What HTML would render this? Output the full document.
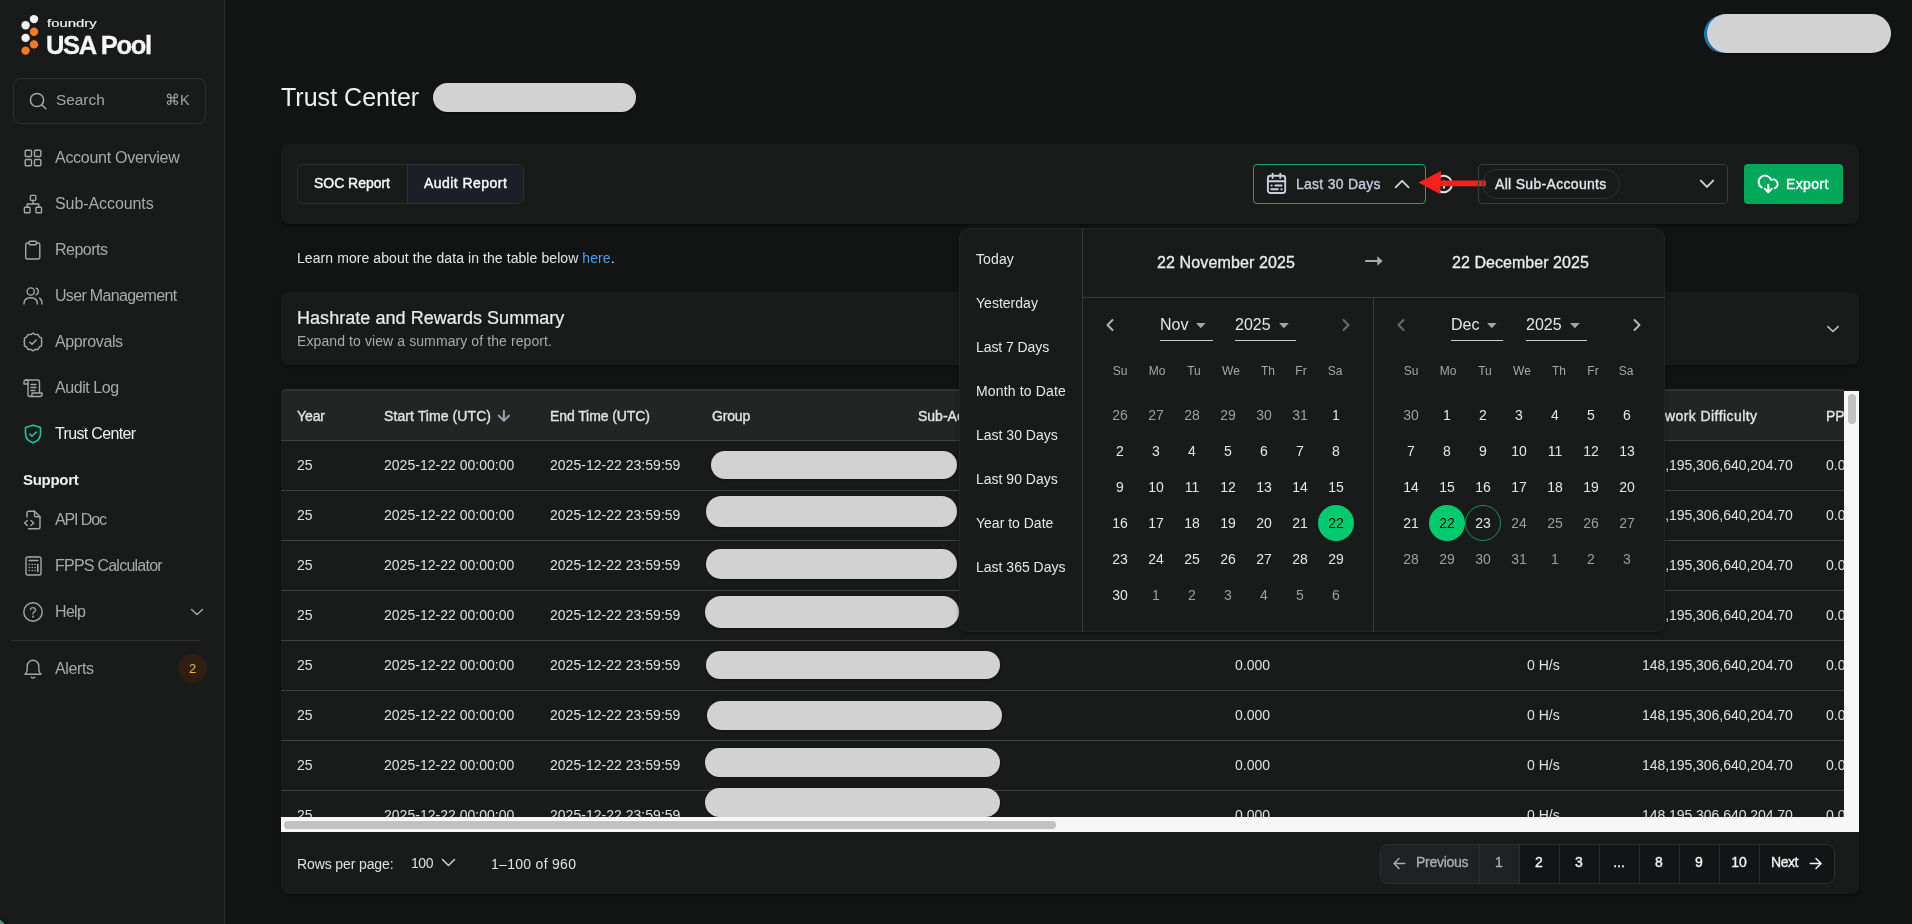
<!DOCTYPE html><html><head><meta charset="utf-8"><style>
*{box-sizing:border-box;margin:0;padding:0}
html,body{width:1912px;height:924px;overflow:hidden;background:#121313;font-family:"Liberation Sans",sans-serif;color:#e6e6e6}
#root{position:absolute;left:0;top:0;width:1912px;height:924px;will-change:transform}
.a{position:absolute;white-space:nowrap}
#sb{position:absolute;left:0;top:0;width:225px;height:924px;background:#191a1a;border-right:1px solid #2a2b2b}
.nav{position:absolute;left:55px;font-size:16px;color:#a6ada8;line-height:16px;white-space:nowrap}
.ic{position:absolute;overflow:visible}
.card{position:absolute;left:281px;width:1578px;background:#191a1a;border-radius:8px;box-shadow:0 2px 3px rgba(0,0,0,.28)}
.cell{position:absolute;white-space:nowrap;font-size:14px;line-height:16px;color:#e0e0e0}
.hd{position:absolute;white-space:nowrap;font-size:14px;line-height:16px;color:#e4e4e4;-webkit-text-stroke:0.35px #e4e4e4}
.pill{position:absolute;background:#d2d2d2;box-shadow:0 1px 2px rgba(0,0,0,.35)}
.rb{position:absolute;left:281px;width:1563px;height:1px;background:#404141}
.day{position:absolute;width:36px;height:36px;text-align:center;line-height:36px;font-size:14px;color:#e6e6e6}
.dim{color:#9d9fa3}
.wd{position:absolute;width:36px;text-align:center;font-size:12px;line-height:14px;color:#a5a8ac}
.ps{position:absolute;left:976px;font-size:14px;line-height:16px;color:#e6e6e6;white-space:nowrap}
</style></head><body><div id="root">
<div id="sb"></div>
<svg class="ic" style="left:0;top:0" width="60" height="60" viewBox="0 0 60 60">
<circle cx="34" cy="19.1" r="4.2" fill="#f4f4f4"/>
<circle cx="25.6" cy="25.3" r="4.2" fill="#f4f4f4"/>
<circle cx="34" cy="31.8" r="4.2" fill="#f47a20"/>
<circle cx="25.6" cy="37.9" r="4.2" fill="#f4f4f4"/>
<circle cx="34" cy="44.4" r="4.2" fill="#f47a20"/>
<circle cx="25.6" cy="50.6" r="4.2" fill="#f47a20"/>
</svg>
<div class="a" style="left:47px;top:17px;font-size:10.5px;color:#f4f4f4;line-height:12px;transform:scaleX(1.42);transform-origin:0 0;-webkit-text-stroke:0.15px #f4f4f4">foundry</div>
<div id="t1" class="a" style="left:46px;top:31px;font-size:25.5px;font-weight:700;color:#f7f7f7;line-height:28px;-webkit-text-stroke:0.3px #f7f7f7;letter-spacing:-1.319px">USA Pool</div>
<div class="a" style="left:13px;top:78px;width:193px;height:46px;border:1px solid #2f3131;border-radius:8px"></div>
<svg class="ic" style="left:29px;top:92px" width="18" height="18" viewBox="0 0 18 18"><circle cx="8" cy="8" r="6.6" stroke="#a2a7a4" stroke-width="1.5" fill="none"/><path d="M13 13 L16.8 16.8" stroke="#a2a7a4" stroke-width="1.5" stroke-linecap="round"/></svg>
<div id="t2" class="a" style="left:56px;top:92px;font-size:15.4px;color:#a2a7a4;line-height:16px;letter-spacing:-0.013px">Search</div>
<div id="t3" class="a" style="left:165px;top:92px;font-size:14.5px;color:#a2a7a4;line-height:16px;letter-spacing:0.028px">⌘K</div>
<svg class="ic" style="left:24px;top:149px" width="18" height="18" viewBox="0 0 18 18" stroke="#a3aaa6" stroke-width="1.4" fill="none" stroke-linecap="round" stroke-linejoin="round"><rect x="1.2" y="1.2" width="6.3" height="6.3" rx="1"/><rect x="10.5" y="1.2" width="6.3" height="6.3" rx="1"/><rect x="1.2" y="10.5" width="6.3" height="6.3" rx="1"/><rect x="10.5" y="10.5" width="6.3" height="6.3" rx="1"/></svg>
<svg class="ic" style="left:23px;top:194px" width="20" height="20" viewBox="0 0 20 20" stroke="#a3aaa6" stroke-width="1.4" fill="none" stroke-linecap="round" stroke-linejoin="round"><rect x="7.4" y="1.4" width="5.4" height="5" rx="0.8"/><rect x="1.4" y="13.3" width="5.6" height="5.5" rx="0.8"/><rect x="12.9" y="13.3" width="5.6" height="5.5" rx="0.8"/><path d="M10 6.4V10M4.2 13.3V10H15.7V13.3"/></svg>
<svg class="ic" style="left:24px;top:240px" width="18" height="20" viewBox="0 0 18 20" stroke="#a3aaa6" stroke-width="1.4" fill="none" stroke-linecap="round" stroke-linejoin="round"><path d="M5 3H3.2A1.5 1.5 0 0 0 1.7 4.5V17.5A1.5 1.5 0 0 0 3.2 19H14.3A1.5 1.5 0 0 0 15.8 17.5V4.5A1.5 1.5 0 0 0 14.3 3H12.5"/><rect x="5" y="1.2" width="7.5" height="3.6" rx="1"/></svg>
<svg class="ic" style="left:23px;top:287px" width="20" height="18" viewBox="0 0 20 18" stroke="#a3aaa6" stroke-width="1.4" fill="none" stroke-linecap="round" stroke-linejoin="round"><circle cx="7.7" cy="4.5" r="3.6"/><path d="M1 17C1 13 3.8 10.8 7.7 10.8S14.4 13 14.4 17"/><path d="M13 1.2A3.5 3.5 0 0 1 13 7.8"/><path d="M16.5 11.2C18 12.2 19 14 19 17"/></svg>
<svg class="ic" style="left:23px;top:332px" width="20" height="20" viewBox="0 0 20 20" stroke="#a3aaa6" stroke-width="1.4" fill="none" stroke-linecap="round" stroke-linejoin="round"><path d="M10 1.2L12.3 2.6L15 2.5L16.3 4.9L18.6 6.2L18.5 8.9L19 10L18.5 11.1L18.6 13.8L16.3 15.1L15 17.5L12.3 17.4L10 18.8L7.7 17.4L5 17.5L3.7 15.1L1.4 13.8L1.5 11.1L1 10L1.5 8.9L1.4 6.2L3.7 4.9L5 2.5L7.7 2.6Z"/><path d="M6.8 10.2L9 12.3L13.2 8"/></svg>
<svg class="ic" style="left:23px;top:379px" width="20" height="19" viewBox="0 0 20 19" stroke="#a3aaa6" stroke-width="1.4" fill="none" stroke-linecap="round" stroke-linejoin="round"><path d="M3 1H14.5A2 2 0 0 1 16.5 3V13.5"/><path d="M3 1A2 2 0 0 0 1 3V5H5"/><path d="M3 1A2 2 0 0 1 5 3V15.5A2 2 0 0 0 7 17.5H17A2 2 0 0 0 19 15.5V14H9V15.5A2 2 0 0 1 7 17.5"/><path d="M8 5.5H13M8 8.5H13M8 11.5H12"/></svg>
<svg class="ic" style="left:24px;top:424px" width="18" height="20" viewBox="0 0 18 20" stroke="#1dc8a2" stroke-width="1.6" fill="none" stroke-linecap="round" stroke-linejoin="round"><path d="M9 1.2L16.5 3.6V9.8C16.5 14.2 13.3 17.2 9 18.8C4.7 17.2 1.5 14.2 1.5 9.8V3.6Z"/><path d="M5.8 10.2L8 12.2L12.3 8"/></svg>
<svg class="ic" style="left:23px;top:510px" width="19" height="20" viewBox="0 0 19 20" stroke="#a3aaa6" stroke-width="1.4" fill="none" stroke-linecap="round" stroke-linejoin="round"><path d="M4 7V3A1.8 1.8 0 0 1 5.8 1.2H11.5L17 6.8V17A1.8 1.8 0 0 1 15.2 18.8H5.5"/><path d="M11.5 1.2V5.2A1.6 1.6 0 0 0 13.1 6.8H17"/><path d="M4.3 10.5L1.6 13L4.3 15.5M8 10.5L10.7 13L8 15.5"/></svg>
<svg class="ic" style="left:25px;top:556px" width="17" height="20" viewBox="0 0 17 20" stroke="#a3aaa6" stroke-width="1.4" fill="none" stroke-linecap="round" stroke-linejoin="round"><rect x="1" y="1" width="15" height="18" rx="1.8"/><path d="M4 4.5H13"/><path d="M4.3 8.5h.1M7.2 8.5h.1M10 8.5h.1M4.3 11.5h.1M7.2 11.5h.1M10 11.5h.1M4.3 14.5h.1M7.2 14.5h.1M10 14.5h.1M12.8 8.5V15.5" stroke-width="1.6"/></svg>
<svg class="ic" style="left:22px;top:601px" width="22" height="22" viewBox="0 0 22 22" stroke="#a3aaa6" stroke-width="1.4" fill="none" stroke-linecap="round" stroke-linejoin="round"><circle cx="11" cy="11" r="9.2"/><path d="M8.3 8.6A2.8 2.8 0 0 1 13.7 8.8C13.7 10.6 11 11 11 12.8"/><circle cx="11" cy="15.6" r="0.4" fill="#a3aaa6"/></svg>
<svg class="ic" style="left:23px;top:658px" width="20" height="21" viewBox="0 0 20 21" stroke="#a3aaa6" stroke-width="1.4" fill="none" stroke-linecap="round" stroke-linejoin="round"><path d="M2 16.2H18C16.6 15 15.8 13.5 15.8 11.5V8A5.8 5.8 0 0 0 4.2 8V11.5C4.2 13.5 3.4 15 2 16.2Z"/><path d="M8.3 19.2A2 2 0 0 0 11.7 19.2"/></svg>
<div id="t4" class="nav" style="top:150px;letter-spacing:-0.282px">Account Overview</div>
<div id="t5" class="nav" style="top:196px;letter-spacing:-0.083px">Sub-Accounts</div>
<div id="t6" class="nav" style="top:242px;letter-spacing:-0.505px">Reports</div>
<div id="t7" class="nav" style="top:288px;letter-spacing:-0.680px">User Management</div>
<div id="t8" class="nav" style="top:334px;letter-spacing:-0.382px">Approvals</div>
<div id="t9" class="nav" style="top:380px;letter-spacing:-0.426px">Audit Log</div>
<div id="t10" class="nav" style="top:426px;color:#eef0ee;letter-spacing:-0.657px">Trust Center</div>
<div id="t11" class="nav" style="top:512px;letter-spacing:-1.115px">API Doc</div>
<div id="t12" class="nav" style="top:558px;letter-spacing:-0.762px">FPPS Calculator</div>
<div id="t13" class="nav" style="top:604px;letter-spacing:-0.669px">Help</div>
<div id="t14" class="nav" style="top:661px;letter-spacing:-0.381px">Alerts</div>
<div id="t15" class="a" style="left:23px;top:472px;font-size:15px;font-weight:700;color:#f0f0f0;line-height:16px;letter-spacing:-0.283px">Support</div>
<svg class="ic" style="left:190px;top:607px" width="14" height="10" viewBox="0 0 14 10" stroke="#a3aaa6" stroke-width="1.4" fill="none" stroke-linecap="round" stroke-linejoin="round"><path d="M1.5 2.5L7 7.5L12.5 2.5"/></svg>
<div class="a" style="left:11px;top:640px;width:189px;height:1px;background:#2f3131"></div>
<div class="a" style="left:178px;top:654px;width:29px;height:29px;border-radius:50%;background:#301f10;color:#f5b83c;font-size:13px;text-align:center;line-height:29px">2</div>
<div class="a" style="left:1704px;top:15px;width:60px;height:38px;border-radius:20px;background:#1a7bc0"></div>
<div class="a" style="left:1707px;top:14px;width:184px;height:39px;border-radius:20px;background:#d2d2d2;box-shadow:0 1px 2px rgba(0,0,0,.4)"></div>
<div id="t16" class="a" style="left:281px;top:83px;font-size:25px;color:#f0f0f0;line-height:28px;letter-spacing:0.017px">Trust Center</div>
<div class="a" style="left:433px;top:83px;width:203px;height:29px;border-radius:15px;background:#d2d2d2;box-shadow:0 1px 2px rgba(0,0,0,.4)"></div>
<div class="card" style="top:144px;height:80px"></div>
<div class="a" style="left:297px;top:164px;width:227px;height:40px;border:1px solid #2f3131;border-radius:6px;overflow:hidden"><div style="position:absolute;left:109px;top:0;width:117px;height:38px;background:#1c1f27;border-left:1px solid #2f3131"></div></div>
<div id="t17" class="a" style="left:314px;top:175px;font-size:14px;line-height:16px;color:#fafafa;-webkit-text-stroke:0.4px #fafafa;letter-spacing:-0.028px">SOC Report</div>
<div id="t18" class="a" style="left:424px;top:175px;font-size:14px;line-height:16px;color:#fafafa;-webkit-text-stroke:0.4px #fafafa;letter-spacing:0.452px">Audit Report</div>
<div class="a" style="left:1253px;top:164px;width:173px;height:40px;border:1px solid #17a867;border-radius:4px"></div>
<svg class="ic" style="left:1262px;top:168px" width="30" height="30" viewBox="0 0 30 30" stroke="#c9d0dc" stroke-width="1.9" fill="none" stroke-linecap="round" stroke-linejoin="round"><rect x="5.9" y="7.7" width="17.3" height="17.3" rx="2.5"/><path d="M10.6 5.6V10M18.3 5.6V10M5.9 13.3H23.2M13.4 17.5H19.7M9.2 21.3H15.8"/><path d="M9.6 17.5h.05M19.5 21.3h.05" stroke-width="2.2"/></svg>
<div id="t19" class="a" style="left:1296px;top:176px;font-size:14px;line-height:16px;color:#c9d0dc;-webkit-text-stroke:0.3px #c9d0dc;letter-spacing:0.262px">Last 30 Days</div>
<svg class="ic" style="left:1390px;top:170px" width="24" height="24" viewBox="1390 170 24 24" stroke="#c9d0dc" stroke-width="1.9" fill="none" stroke-linecap="round" stroke-linejoin="round"><path d="M1395.6 187.3L1402.1 180.8L1408.6 187.3"/></svg>
<svg class="ic" style="left:1430px;top:170px" width="28" height="28" viewBox="1430 170 28 28" stroke="#e6e6e6" stroke-width="1.9" fill="none"><circle cx="1443.6" cy="184" r="8.3"/><path d="M1444 185V188.5M1444 180.6V181.6"/></svg>
<svg class="ic" style="left:1410px;top:165px" width="80" height="36" viewBox="1410 165 80 36"><path d="M1438 180.4H1485.8V186.2H1438Z" fill="#f7201f"/><path d="M1418.5 182.6L1441 171L1440.3 194.2Z" fill="#f7201f"/></svg>
<div class="a" style="left:1478px;top:164px;width:250px;height:40px;border:1px solid #3a3c3c;border-radius:4px"></div>
<div class="a" style="left:1482px;top:169px;width:138px;height:30px;border:1px solid #2c3442;border-radius:15px"></div>
<div id="t20" class="a" style="left:1495px;top:176px;font-size:14px;line-height:16px;color:#e4e6ea;-webkit-text-stroke:0.35px #e4e6ea;letter-spacing:0.313px">All Sub-Accounts</div>
<svg class="ic" style="left:1695px;top:175px" width="24" height="18" viewBox="1695 175 24 18" stroke="#d0d3d6" stroke-width="1.9" fill="none" stroke-linecap="round" stroke-linejoin="round"><path d="M1700.8 180.6L1707 186.9L1713.2 180.6"/></svg>
<div class="a" style="left:1744px;top:164px;width:99px;height:40px;background:#02a85a;border-radius:4px"></div>
<svg class="ic" style="left:1750px;top:168px" width="40" height="32" viewBox="1750 168 40 32" stroke="#fff" stroke-width="2" fill="none" stroke-linecap="round" stroke-linejoin="round"><path d="M1761.6 187.4A6.4 6.4 0 1 1 1771.1 179.9A4.3 4.3 0 0 1 1774.9 188.2"/><path d="M1768.3 184.8V191.8M1764.7 188.6L1768.3 192.2L1771.9 188.6"/></svg>
<div id="t21" class="a" style="left:1786px;top:176px;font-size:14px;line-height:16px;color:#fff;-webkit-text-stroke:0.4px #fff;letter-spacing:0.366px">Export</div>
<div class="a" style="left:297px;top:250px;font-size:14px;color:#e6e6e6;line-height:16px;letter-spacing:0.08px">Learn more about the data in the table below <span style="color:#4a9ff5">here</span>.</div>
<div class="card" style="top:292px;height:73px"></div>
<div id="t22" class="a" style="left:297px;top:308px;font-size:18px;line-height:20px;color:#ececec;-webkit-text-stroke:0.2px #ececec;letter-spacing:0.044px">Hashrate and Rewards Summary</div>
<div id="t23" class="a" style="left:297px;top:333px;font-size:14px;line-height:16px;color:#a9acae;letter-spacing:0.096px">Expand to view a summary of the report.</div>
<svg class="ic" style="left:1826px;top:322px" width="14" height="12" viewBox="0 0 14 12" stroke="#bdbfc0" stroke-width="1.6" fill="none" stroke-linecap="round" stroke-linejoin="round"><path d="M1.9 4.6L7 9.5L12.1 4.6"/></svg>
<div class="card" style="top:389px;height:505px;border-radius:5px 5px 8px 8px"></div>
<div class="a" style="left:281px;top:389px;width:1563px;height:51px;background:#232424;border-radius:5px 0 0 0;border-top:2px solid #303434"></div>
<div class="rb" style="top:440px"></div>
<div id="t24" class="hd" style="left:297px;top:408px;letter-spacing:-0.099px">Year</div>
<div id="t25" class="hd" style="left:384px;top:408px;letter-spacing:0.081px">Start Time (UTC)</div>
<div id="t26" class="hd" style="left:550px;top:408px;letter-spacing:-0.094px">End Time (UTC)</div>
<div id="t27" class="hd" style="left:712px;top:408px;letter-spacing:-0.180px">Group</div>
<div id="t28" class="hd" style="left:918px;top:408px">Sub-Ac</div>
<div id="t29" class="hd" style="left:1665px;top:408px;letter-spacing:0.422px">work Difficulty</div>
<div id="t30" class="hd" style="left:1826px;top:408px">PP</div>
<svg class="ic" style="left:494px;top:406px" width="20" height="20" viewBox="494 406 20 20" stroke="#9ca0aa" stroke-width="2" fill="none" stroke-linecap="round" stroke-linejoin="round"><path d="M503.9 410.8V420.6M498.7 415.6L503.9 420.8L509.1 415.6"/></svg>
<div id="t31" class="cell" style="left:297px;top:457px">25</div>
<div id="t32" class="cell" style="left:384px;top:457px;letter-spacing:0.017px">2025-12-22 00:00:00</div>
<div id="t33" class="cell" style="left:550px;top:457px;letter-spacing:0.022px">2025-12-22 23:59:59</div>
<div id="t34" class="cell" style="left:1235px;top:457px">0.000</div>
<div id="t35" class="cell" style="left:1527px;top:457px">0 H/s</div>
<div id="t36" class="cell" style="left:1642px;top:457px;letter-spacing:-0.048px">148,195,306,640,204.70</div>
<div class="cell" style="left:1826px;top:457px;width:18px;overflow:hidden">0.000</div>
<div class="pill" style="left:711px;top:451px;width:246px;height:28px;border-radius:14.0px"></div>
<div class="rb" style="top:490px"></div>
<div id="t37" class="cell" style="left:297px;top:507px">25</div>
<div id="t38" class="cell" style="left:384px;top:507px;letter-spacing:0.017px">2025-12-22 00:00:00</div>
<div id="t39" class="cell" style="left:550px;top:507px;letter-spacing:0.022px">2025-12-22 23:59:59</div>
<div id="t40" class="cell" style="left:1235px;top:507px">0.000</div>
<div id="t41" class="cell" style="left:1527px;top:507px">0 H/s</div>
<div id="t42" class="cell" style="left:1642px;top:507px;letter-spacing:-0.048px">148,195,306,640,204.70</div>
<div class="cell" style="left:1826px;top:507px;width:18px;overflow:hidden">0.000</div>
<div class="pill" style="left:706px;top:496px;width:251px;height:31px;border-radius:15.5px"></div>
<div class="rb" style="top:540px"></div>
<div id="t43" class="cell" style="left:297px;top:557px">25</div>
<div id="t44" class="cell" style="left:384px;top:557px;letter-spacing:0.017px">2025-12-22 00:00:00</div>
<div id="t45" class="cell" style="left:550px;top:557px;letter-spacing:0.022px">2025-12-22 23:59:59</div>
<div id="t46" class="cell" style="left:1235px;top:557px">0.000</div>
<div id="t47" class="cell" style="left:1527px;top:557px">0 H/s</div>
<div id="t48" class="cell" style="left:1642px;top:557px;letter-spacing:-0.048px">148,195,306,640,204.70</div>
<div class="cell" style="left:1826px;top:557px;width:18px;overflow:hidden">0.000</div>
<div class="pill" style="left:706px;top:549px;width:251px;height:30px;border-radius:15.0px"></div>
<div class="rb" style="top:590px"></div>
<div id="t49" class="cell" style="left:297px;top:607px">25</div>
<div id="t50" class="cell" style="left:384px;top:607px;letter-spacing:0.017px">2025-12-22 00:00:00</div>
<div id="t51" class="cell" style="left:550px;top:607px;letter-spacing:0.022px">2025-12-22 23:59:59</div>
<div id="t52" class="cell" style="left:1235px;top:607px">0.000</div>
<div id="t53" class="cell" style="left:1527px;top:607px">0 H/s</div>
<div id="t54" class="cell" style="left:1642px;top:607px;letter-spacing:-0.048px">148,195,306,640,204.70</div>
<div class="cell" style="left:1826px;top:607px;width:18px;overflow:hidden">0.000</div>
<div class="pill" style="left:705px;top:596px;width:254px;height:32px;border-radius:16.0px"></div>
<div class="rb" style="top:640px"></div>
<div id="t55" class="cell" style="left:297px;top:657px">25</div>
<div id="t56" class="cell" style="left:384px;top:657px;letter-spacing:0.017px">2025-12-22 00:00:00</div>
<div id="t57" class="cell" style="left:550px;top:657px;letter-spacing:0.022px">2025-12-22 23:59:59</div>
<div id="t58" class="cell" style="left:1235px;top:657px">0.000</div>
<div id="t59" class="cell" style="left:1527px;top:657px">0 H/s</div>
<div id="t60" class="cell" style="left:1642px;top:657px;letter-spacing:-0.048px">148,195,306,640,204.70</div>
<div class="cell" style="left:1826px;top:657px;width:18px;overflow:hidden">0.000</div>
<div class="pill" style="left:706px;top:651px;width:294px;height:28px;border-radius:14.0px"></div>
<div class="rb" style="top:690px"></div>
<div id="t61" class="cell" style="left:297px;top:707px">25</div>
<div id="t62" class="cell" style="left:384px;top:707px;letter-spacing:0.017px">2025-12-22 00:00:00</div>
<div id="t63" class="cell" style="left:550px;top:707px;letter-spacing:0.022px">2025-12-22 23:59:59</div>
<div id="t64" class="cell" style="left:1235px;top:707px">0.000</div>
<div id="t65" class="cell" style="left:1527px;top:707px">0 H/s</div>
<div id="t66" class="cell" style="left:1642px;top:707px;letter-spacing:-0.048px">148,195,306,640,204.70</div>
<div class="cell" style="left:1826px;top:707px;width:18px;overflow:hidden">0.000</div>
<div class="pill" style="left:707px;top:701px;width:295px;height:29px;border-radius:14.5px"></div>
<div class="rb" style="top:740px"></div>
<div id="t67" class="cell" style="left:297px;top:757px">25</div>
<div id="t68" class="cell" style="left:384px;top:757px;letter-spacing:0.017px">2025-12-22 00:00:00</div>
<div id="t69" class="cell" style="left:550px;top:757px;letter-spacing:0.022px">2025-12-22 23:59:59</div>
<div id="t70" class="cell" style="left:1235px;top:757px">0.000</div>
<div id="t71" class="cell" style="left:1527px;top:757px">0 H/s</div>
<div id="t72" class="cell" style="left:1642px;top:757px;letter-spacing:-0.048px">148,195,306,640,204.70</div>
<div class="cell" style="left:1826px;top:757px;width:18px;overflow:hidden">0.000</div>
<div class="pill" style="left:705px;top:748px;width:295px;height:29px;border-radius:14.5px"></div>
<div class="rb" style="top:790px"></div>
<div id="t73" class="cell" style="left:297px;top:807px">25</div>
<div id="t74" class="cell" style="left:384px;top:807px;letter-spacing:0.017px">2025-12-22 00:00:00</div>
<div id="t75" class="cell" style="left:550px;top:807px;letter-spacing:0.022px">2025-12-22 23:59:59</div>
<div id="t76" class="cell" style="left:1235px;top:807px">0.000</div>
<div id="t77" class="cell" style="left:1527px;top:807px">0 H/s</div>
<div id="t78" class="cell" style="left:1642px;top:807px;letter-spacing:-0.048px">148,195,306,640,204.70</div>
<div class="cell" style="left:1826px;top:807px;width:18px;overflow:hidden">0.000</div>
<div class="pill" style="left:705px;top:788px;width:295px;height:29px;border-radius:14.5px"></div>
<div class="a" style="left:281px;top:817px;width:1578px;height:15px;background:#f7f7f7"></div>
<div class="a" style="left:284px;top:821px;width:772px;height:8px;background:#c1c1c1;border-radius:4px"></div>
<div class="a" style="left:1844px;top:391px;width:15px;height:441px;background:#f7f7f7"></div>
<div class="a" style="left:1848px;top:394px;width:8px;height:30px;background:#c1c1c1;border-radius:4px"></div>
<div id="t79" class="cell" style="left:297px;top:856px;letter-spacing:-0.113px">Rows per page:</div>
<div id="t80" class="cell" style="left:411px;top:855px;letter-spacing:-0.430px">100</div>
<svg class="ic" style="left:441px;top:857px" width="15" height="11" viewBox="0 0 15 11" stroke="#cfd1d3" stroke-width="1.5" fill="none" stroke-linecap="round" stroke-linejoin="round"><path d="M1.5 2.5L7.5 8.5L13.5 2.5"/></svg>
<div id="t81" class="cell" style="left:491px;top:856px;letter-spacing:0.295px">1–100 of 960</div>
<div class="a" style="left:1380px;top:844px;width:455px;height:40px;border:1px solid #2c2e2f;border-radius:8px;overflow:hidden;background:#131415">
<div style="position:absolute;left:0;top:0;width:138px;height:38px;background:#202125"></div>
<div style="position:absolute;left:98px;top:0;width:1px;height:38px;background:#2c2e2f"></div>
<div style="position:absolute;left:138px;top:0;width:1px;height:38px;background:#2c2e2f"></div>
<div style="position:absolute;left:178px;top:0;width:1px;height:38px;background:#2c2e2f"></div>
<div style="position:absolute;left:218px;top:0;width:1px;height:38px;background:#2c2e2f"></div>
<div style="position:absolute;left:258px;top:0;width:1px;height:38px;background:#2c2e2f"></div>
<div style="position:absolute;left:298px;top:0;width:1px;height:38px;background:#2c2e2f"></div>
<div style="position:absolute;left:338px;top:0;width:1px;height:38px;background:#2c2e2f"></div>
<div style="position:absolute;left:378px;top:0;width:1px;height:38px;background:#2c2e2f"></div>
</div>
<svg class="ic" style="left:1390px;top:853px" width="20" height="20" viewBox="1390 853 20 20" stroke="#a8aea9" stroke-width="1.5" fill="none" stroke-linecap="round" stroke-linejoin="round"><path d="M1404.8 863.5H1394M1399 858.5L1394 863.5L1399 868.5"/></svg>
<div id="t82" class="a" style="left:1416px;top:854px;font-size:14px;line-height:16px;color:#a8aea9;-webkit-text-stroke:0.35px #a8aea9;letter-spacing:-0.267px">Previous</div>
<div class="a" style="left:1479px;top:854px;width:40px;text-align:center;font-size:14px;line-height:16px;color:#a8aea9;-webkit-text-stroke:0.35px #a8aea9">1</div>
<div class="a" style="left:1519px;top:854px;width:40px;text-align:center;font-size:14px;line-height:16px;color:#f4f4f4;-webkit-text-stroke:0.35px #f4f4f4">2</div>
<div class="a" style="left:1559px;top:854px;width:40px;text-align:center;font-size:14px;line-height:16px;color:#f4f4f4;-webkit-text-stroke:0.35px #f4f4f4">3</div>
<div class="a" style="left:1599px;top:854px;width:40px;text-align:center;font-size:14px;line-height:16px;color:#f4f4f4;-webkit-text-stroke:0.35px #f4f4f4">...</div>
<div class="a" style="left:1639px;top:854px;width:40px;text-align:center;font-size:14px;line-height:16px;color:#f4f4f4;-webkit-text-stroke:0.35px #f4f4f4">8</div>
<div class="a" style="left:1679px;top:854px;width:40px;text-align:center;font-size:14px;line-height:16px;color:#f4f4f4;-webkit-text-stroke:0.35px #f4f4f4">9</div>
<div class="a" style="left:1719px;top:854px;width:40px;text-align:center;font-size:14px;line-height:16px;color:#f4f4f4;-webkit-text-stroke:0.35px #f4f4f4">10</div>
<div id="t83" class="a" style="left:1771px;top:854px;font-size:14px;line-height:16px;color:#f0f0f0;-webkit-text-stroke:0.35px #f0f0f0;letter-spacing:-0.432px">Next</div>
<svg class="ic" style="left:1805px;top:853px" width="20" height="20" viewBox="1805 853 20 20" stroke="#f4f4f4" stroke-width="1.5" fill="none" stroke-linecap="round" stroke-linejoin="round"><path d="M1810.3 863.5H1821M1816 858.5L1821 863.5L1816 868.5"/></svg>
<div class="a" style="left:959px;top:228px;width:706px;height:404px;background:#191a1a;border-radius:10px;border:1px solid #232525;box-shadow:0 3px 4px rgba(0,0,0,.3)"></div>
<div class="a" style="left:1082px;top:228px;width:1px;height:404px;background:#393a3a"></div>
<div class="a" style="left:1083px;top:297px;width:582px;height:1px;background:#393a3a"></div>
<div class="a" style="left:1373px;top:298px;width:1px;height:334px;background:#393a3a"></div>
<div id="t84" class="ps" style="top:251px;letter-spacing:0.110px">Today</div>
<div id="t85" class="ps" style="top:295px;letter-spacing:0.019px">Yesterday</div>
<div id="t86" class="ps" style="top:339px;letter-spacing:-0.074px">Last 7 Days</div>
<div id="t87" class="ps" style="top:383px;letter-spacing:0.155px">Month to Date</div>
<div id="t88" class="ps" style="top:427px">Last 30 Days</div>
<div id="t89" class="ps" style="top:471px">Last 90 Days</div>
<div id="t90" class="ps" style="top:515px">Year to Date</div>
<div id="t91" class="ps" style="top:559px">Last 365 Days</div>
<div id="t92" class="a" style="left:1157px;top:254px;font-size:16px;line-height:18px;color:#ededed;-webkit-text-stroke:0.3px #ededed;letter-spacing:0.127px">22 November 2025</div>
<div id="t93" class="a" style="left:1452px;top:254px;font-size:16px;line-height:18px;color:#ededed;-webkit-text-stroke:0.3px #ededed;letter-spacing:0.047px">22 December 2025</div>
<svg class="ic" style="left:1360px;top:250px" width="30" height="22" viewBox="1360 250 30 22"><path d="M1366 261H1379" stroke="#aaacac" stroke-width="2.2" stroke-linecap="round"/><path d="M1377.6 256.8L1382.4 261L1377.6 265.2Z" fill="#aaacac" stroke="#aaacac" stroke-width="0.6" stroke-linejoin="round"/></svg>
<svg class="ic" style="left:1104px;top:318px" width="12" height="14" viewBox="0 0 12 14" stroke="#b4b6b8" stroke-width="2" fill="none" stroke-linecap="round" stroke-linejoin="round"><path d="M8.5 2L3.5 7L8.5 12"/></svg>
<svg class="ic" style="left:1340px;top:318px" width="12" height="14" viewBox="0 0 12 14" stroke="#6a6c6e" stroke-width="2" fill="none" stroke-linecap="round" stroke-linejoin="round"><path d="M3.5 2L8.5 7L3.5 12"/></svg>
<div class="a" style="left:1160px;top:316px;font-size:16px;line-height:18px;color:#e6e6e6">Nov</div>
<svg class="ic" style="left:1196px;top:323px" width="10" height="6" viewBox="0 0 10 6"><path d="M0 0H9.6L4.8 5.2Z" fill="#a4a6a8"/></svg>
<div class="a" style="left:1160px;top:340px;width:53px;height:1px;background:#cfcfcf"></div>
<div class="a" style="left:1235px;top:316px;font-size:16px;line-height:18px;color:#e6e6e6">2025</div>
<svg class="ic" style="left:1279px;top:323px" width="10" height="6" viewBox="0 0 10 6"><path d="M0 0H9.8L4.9 5.2Z" fill="#a4a6a8"/></svg>
<div class="a" style="left:1235px;top:340px;width:61px;height:1px;background:#cfcfcf"></div>
<svg class="ic" style="left:1395px;top:318px" width="12" height="14" viewBox="0 0 12 14" stroke="#6a6c6e" stroke-width="2" fill="none" stroke-linecap="round" stroke-linejoin="round"><path d="M8.5 2L3.5 7L8.5 12"/></svg>
<svg class="ic" style="left:1631px;top:318px" width="12" height="14" viewBox="0 0 12 14" stroke="#b4b6b8" stroke-width="2" fill="none" stroke-linecap="round" stroke-linejoin="round"><path d="M3.5 2L8.5 7L3.5 12"/></svg>
<div class="a" style="left:1451px;top:316px;font-size:16px;line-height:18px;color:#e6e6e6">Dec</div>
<svg class="ic" style="left:1487px;top:323px" width="10" height="6" viewBox="0 0 10 6"><path d="M0 0H9.6L4.8 5.2Z" fill="#a4a6a8"/></svg>
<div class="a" style="left:1451px;top:340px;width:52px;height:1px;background:#cfcfcf"></div>
<div class="a" style="left:1526px;top:316px;font-size:16px;line-height:18px;color:#e6e6e6">2025</div>
<svg class="ic" style="left:1570px;top:323px" width="10" height="6" viewBox="0 0 10 6"><path d="M0 0H9.8L4.9 5.2Z" fill="#a4a6a8"/></svg>
<div class="a" style="left:1526px;top:340px;width:61px;height:1px;background:#cfcfcf"></div>
<div class="wd" style="left:1102px;top:364px">Su</div>
<div class="wd" style="left:1393px;top:364px">Su</div>
<div class="wd" style="left:1139px;top:364px">Mo</div>
<div class="wd" style="left:1430px;top:364px">Mo</div>
<div class="wd" style="left:1176px;top:364px">Tu</div>
<div class="wd" style="left:1467px;top:364px">Tu</div>
<div class="wd" style="left:1213px;top:364px">We</div>
<div class="wd" style="left:1504px;top:364px">We</div>
<div class="wd" style="left:1250px;top:364px">Th</div>
<div class="wd" style="left:1541px;top:364px">Th</div>
<div class="wd" style="left:1283px;top:364px">Fr</div>
<div class="wd" style="left:1575px;top:364px">Fr</div>
<div class="wd" style="left:1317px;top:364px">Sa</div>
<div class="wd" style="left:1608px;top:364px">Sa</div>
<div class="day dim" style="left:1102px;top:397px">26</div>
<div class="day dim" style="left:1138px;top:397px">27</div>
<div class="day dim" style="left:1174px;top:397px">28</div>
<div class="day dim" style="left:1210px;top:397px">29</div>
<div class="day dim" style="left:1246px;top:397px">30</div>
<div class="day dim" style="left:1282px;top:397px">31</div>
<div class="day" style="left:1318px;top:397px">1</div>
<div class="day" style="left:1102px;top:433px">2</div>
<div class="day" style="left:1138px;top:433px">3</div>
<div class="day" style="left:1174px;top:433px">4</div>
<div class="day" style="left:1210px;top:433px">5</div>
<div class="day" style="left:1246px;top:433px">6</div>
<div class="day" style="left:1282px;top:433px">7</div>
<div class="day" style="left:1318px;top:433px">8</div>
<div class="day" style="left:1102px;top:469px">9</div>
<div class="day" style="left:1138px;top:469px">10</div>
<div class="day" style="left:1174px;top:469px">11</div>
<div class="day" style="left:1210px;top:469px">12</div>
<div class="day" style="left:1246px;top:469px">13</div>
<div class="day" style="left:1282px;top:469px">14</div>
<div class="day" style="left:1318px;top:469px">15</div>
<div class="day" style="left:1102px;top:505px">16</div>
<div class="day" style="left:1138px;top:505px">17</div>
<div class="day" style="left:1174px;top:505px">18</div>
<div class="day" style="left:1210px;top:505px">19</div>
<div class="day" style="left:1246px;top:505px">20</div>
<div class="day" style="left:1282px;top:505px">21</div>
<div class="day" style="left:1318px;top:505px;background:#02cb6f;border-radius:50%;color:#0c0c0c">22</div>
<div class="day" style="left:1102px;top:541px">23</div>
<div class="day" style="left:1138px;top:541px">24</div>
<div class="day" style="left:1174px;top:541px">25</div>
<div class="day" style="left:1210px;top:541px">26</div>
<div class="day" style="left:1246px;top:541px">27</div>
<div class="day" style="left:1282px;top:541px">28</div>
<div class="day" style="left:1318px;top:541px">29</div>
<div class="day" style="left:1102px;top:577px">30</div>
<div class="day dim" style="left:1138px;top:577px">1</div>
<div class="day dim" style="left:1174px;top:577px">2</div>
<div class="day dim" style="left:1210px;top:577px">3</div>
<div class="day dim" style="left:1246px;top:577px">4</div>
<div class="day dim" style="left:1282px;top:577px">5</div>
<div class="day dim" style="left:1318px;top:577px">6</div>
<div class="day dim" style="left:1393px;top:397px">30</div>
<div class="day" style="left:1429px;top:397px">1</div>
<div class="day" style="left:1465px;top:397px">2</div>
<div class="day" style="left:1501px;top:397px">3</div>
<div class="day" style="left:1537px;top:397px">4</div>
<div class="day" style="left:1573px;top:397px">5</div>
<div class="day" style="left:1609px;top:397px">6</div>
<div class="day" style="left:1393px;top:433px">7</div>
<div class="day" style="left:1429px;top:433px">8</div>
<div class="day" style="left:1465px;top:433px">9</div>
<div class="day" style="left:1501px;top:433px">10</div>
<div class="day" style="left:1537px;top:433px">11</div>
<div class="day" style="left:1573px;top:433px">12</div>
<div class="day" style="left:1609px;top:433px">13</div>
<div class="day" style="left:1393px;top:469px">14</div>
<div class="day" style="left:1429px;top:469px">15</div>
<div class="day" style="left:1465px;top:469px">16</div>
<div class="day" style="left:1501px;top:469px">17</div>
<div class="day" style="left:1537px;top:469px">18</div>
<div class="day" style="left:1573px;top:469px">19</div>
<div class="day" style="left:1609px;top:469px">20</div>
<div class="day" style="left:1393px;top:505px">21</div>
<div class="day" style="left:1429px;top:505px;background:#02cb6f;border-radius:50%;color:#0c0c0c">22</div>
<div class="day" style="left:1465px;top:505px;border:1px solid #0b9c55;border-radius:50%;line-height:34px">23</div>
<div class="day dim" style="left:1501px;top:505px">24</div>
<div class="day dim" style="left:1537px;top:505px">25</div>
<div class="day dim" style="left:1573px;top:505px">26</div>
<div class="day dim" style="left:1609px;top:505px">27</div>
<div class="day dim" style="left:1393px;top:541px">28</div>
<div class="day dim" style="left:1429px;top:541px">29</div>
<div class="day dim" style="left:1465px;top:541px">30</div>
<div class="day dim" style="left:1501px;top:541px">31</div>
<div class="day dim" style="left:1537px;top:541px">1</div>
<div class="day dim" style="left:1573px;top:541px">2</div>
<div class="day dim" style="left:1609px;top:541px">3</div>
<div class="a" style="left:-38px;top:915px;width:48px;height:48px;border-radius:50%;background:#4c8c82;box-shadow:0 0 2px 1px rgba(0,0,0,.5)"></div>
</div></body></html>
